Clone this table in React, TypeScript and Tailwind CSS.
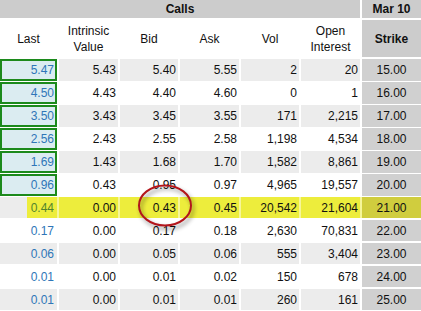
import React from 'react';

interface Row {
  last: string;
  intrinsic: string;
  bid: string;
  ask: string;
  vol: string;
  oi: string;
  strike: string;
  itm?: boolean;
  hl?: boolean;
}

const rows: Row[] = [
  { last: '5.47', intrinsic: '5.43', bid: '5.40', ask: '5.55', vol: '2', oi: '20', strike: '15.00', itm: true },
  { last: '4.50', intrinsic: '4.43', bid: '4.40', ask: '4.60', vol: '0', oi: '1', strike: '16.00', itm: true },
  { last: '3.50', intrinsic: '3.43', bid: '3.45', ask: '3.55', vol: '171', oi: '2,215', strike: '17.00', itm: true },
  { last: '2.56', intrinsic: '2.43', bid: '2.55', ask: '2.58', vol: '1,198', oi: '4,534', strike: '18.00', itm: true },
  { last: '1.69', intrinsic: '1.43', bid: '1.68', ask: '1.70', vol: '1,582', oi: '8,861', strike: '19.00', itm: true },
  { last: '0.96', intrinsic: '0.43', bid: '0.95', ask: '0.97', vol: '4,965', oi: '19,557', strike: '20.00', itm: true },
  { last: '0.44', intrinsic: '0.00', bid: '0.43', ask: '0.45', vol: '20,542', oi: '21,604', strike: '21.00', hl: true },
  { last: '0.17', intrinsic: '0.00', bid: '0.17', ask: '0.18', vol: '2,630', oi: '70,831', strike: '22.00' },
  { last: '0.06', intrinsic: '0.00', bid: '0.05', ask: '0.06', vol: '555', oi: '3,404', strike: '23.00' },
  { last: '0.01', intrinsic: '0.00', bid: '0.01', ask: '0.02', vol: '150', oi: '678', strike: '24.00' },
  { last: '0.01', intrinsic: '0.00', bid: '0.01', ask: '0.01', vol: '260', oi: '161', strike: '25.00' },
];

const cols = 'grid grid-cols-[57px_59px_58px_59px_58px_59px_1fr] gap-x-[2px]';

export default function App() {
  return (
    <div className="relative h-[311px] w-[421px] overflow-hidden bg-white font-['Liberation_Sans',Arial,sans-serif] text-[12px] text-[#111]">
      <div className={`${cols} h-[18px] font-bold`}>
        <div className="col-span-6 flex items-center justify-center bg-[#cccccc]">Calls</div>
        <div className="flex items-center justify-center bg-[#cccccc]">Mar 10</div>
      </div>

      <div className={`${cols} mt-[2px] h-[37px] text-center leading-[16px]`}>
        <div className="flex items-center justify-center">Last</div>
        <div className="flex items-center justify-center">
          Intrinsic
          <br />
          Value
        </div>
        <div className="flex items-center justify-center">Bid</div>
        <div className="flex items-center justify-center">Ask</div>
        <div className="flex items-center justify-center">Vol</div>
        <div className="flex items-center justify-center">
          Open
          <br />
          Interest
        </div>
        <div className="flex items-center justify-center bg-[#cccccc] font-bold">Strike</div>
      </div>

      <div className="mt-[2px] flex flex-col gap-y-[2px]">
        {rows.map((r, i) => {
          const shade = i % 2 === 0;
          const cell = r.hl ? 'bg-[#eded3c]' : shade ? 'bg-[#ececec]' : 'bg-white';
          const num = `flex items-center justify-end pr-[2px] ${cell}`;
          let lastCls = `flex items-center justify-end pr-[3px] text-[#2f76b8] ${cell}`;
          if (r.itm) {
            lastCls = 'flex items-center justify-end pr-[1px] border-2 border-[#1c8a1c] bg-[#dbecf1] text-[#2f76b8]';
          }
          if (r.hl) {
            lastCls =
              'flex items-center justify-end pr-[3px] text-[#52852c] bg-[linear-gradient(90deg,#ececec_27px,#eded3c_27px)]';
          }
          return (
            <div
              key={r.strike}
              className={`${cols} h-[21px] ${r.hl ? 'bg-[linear-gradient(90deg,#ffffff_27px,#f6f69a_27px)]' : ''}`}
            >
              <div className={lastCls}>{r.last}</div>
              <div className={num}>{r.intrinsic}</div>
              <div className={num}>{r.bid}</div>
              <div className={num}>{r.ask}</div>
              <div className={num}>{r.vol}</div>
              <div className={num}>{r.oi}</div>
              <div
                className={`flex items-center justify-center ${r.hl ? 'bg-[#d0cd3e]' : 'bg-[#d0d0d0]'}`}
              >
                {r.strike}
              </div>
            </div>
          );
        })}
      </div>

      <svg
        className="pointer-events-none absolute left-[134px] top-[180px] drop-shadow-[2px_3px_2px_rgba(0,0,0,0.45)]"
        width="64"
        height="52"
        viewBox="0 0 64 52"
      >
        <ellipse cx="31" cy="25.5" rx="26" ry="20" fill="none" stroke="#b3151b" strokeWidth="2" />
      </svg>
    </div>
  );
}
